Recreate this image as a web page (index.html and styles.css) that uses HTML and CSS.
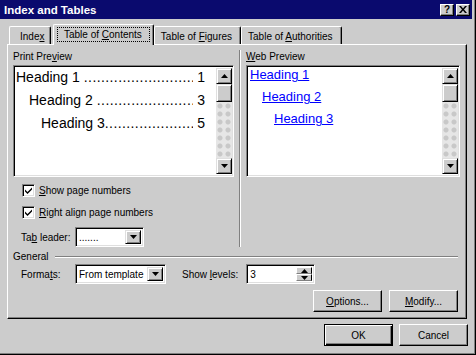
FILE: index.html
```html
<!DOCTYPE html>
<html lang="en">
<head>
  <meta charset="UTF-8">
  <title>Index and Tables</title>
  <link rel="stylesheet" href="styles.css">
</head>
<body>
  <div class="window">
    <div class="titlebar">
      <span class="title">Index and Tables</span>
      <div class="caption-btns">
        <div class="cap-btn help">?</div>
        <div class="cap-btn">
          <svg width="8" height="7" viewBox="0 0 8 7"><path d="M0 0h2l2 2.5L6 0h2L5 3.5 8 7H6L4 4.5 2 7H0l3-3.5z" fill="#000"/></svg>
        </div>
      </div>
    </div>

    <div class="tabs">
      <div class="tab first"><span>Inde<u>x</u></span></div>
      <div class="tab active"><span class="focus">Table of <u>C</u>ontents</span></div>
      <div class="tab"><span>Table of <u>F</u>igures</span></div>
      <div class="tab"><span>Table of <u>A</u>uthorities</span></div>
    </div>

    <div class="panel">
      <div class="previews">
        <div class="col print-col">
          <div class="label">Print Pre<u>v</u>iew</div>
          <div class="preview-box">
            <div class="preview-content print">
              <div class="toc-line lvl1"><span>Heading 1</span><span class="dots"></span><span>1</span></div>
              <div class="toc-line lvl2"><span>Heading 2</span><span class="dots"></span><span>3</span></div>
              <div class="toc-line lvl3"><span>Heading 3</span><span class="dots tight"></span><span>5</span></div>
            </div>
            <div class="scrollbar">
              <div class="sb-btn"><svg width="7" height="4" viewBox="0 0 7 4"><path d="M3.5 0L7 4H0z" fill="#000"/></svg></div>
              <div class="sb-btn thumb"></div>
              <div class="sb-track"></div>
              <div class="sb-btn"><svg width="7" height="4" viewBox="0 0 7 4"><path d="M0 0h7L3.5 4z" fill="#000"/></svg></div>
            </div>
          </div>
          <div class="check-row">
            <span class="checkbox"><svg width="9" height="9" viewBox="0 0 9 9"><path d="M1 3.5l2.5 2.5L8 1.5v2L3.5 8 1 5.5z" fill="#000"/></svg></span>
            <span><u>S</u>how page numbers</span>
          </div>
          <div class="check-row">
            <span class="checkbox"><svg width="9" height="9" viewBox="0 0 9 9"><path d="M1 3.5l2.5 2.5L8 1.5v2L3.5 8 1 5.5z" fill="#000"/></svg></span>
            <span><u>R</u>ight align page numbers</span>
          </div>
          <div class="field-row leader-row">
            <span class="field-label">Ta<u>b</u> leader:</span>
            <div class="combo leader">
              <span class="combo-value">.......</span>
              <div class="combo-btn"><svg width="7" height="4" viewBox="0 0 7 4"><path d="M0 0h7L3.5 4z" fill="#000"/></svg></div>
            </div>
          </div>
        </div>

        <div class="divider"></div>

        <div class="col web-col">
          <div class="label"><u>W</u>eb Preview</div>
          <div class="preview-box">
            <div class="preview-content web">
              <a class="web-line lvl1">Heading 1</a>
              <a class="web-line lvl2">Heading 2</a>
              <a class="web-line lvl3">Heading 3</a>
            </div>
            <div class="scrollbar">
              <div class="sb-btn"><svg width="7" height="4" viewBox="0 0 7 4"><path d="M3.5 0L7 4H0z" fill="#000"/></svg></div>
              <div class="sb-btn thumb"></div>
              <div class="sb-track"></div>
              <div class="sb-btn"><svg width="7" height="4" viewBox="0 0 7 4"><path d="M0 0h7L3.5 4z" fill="#000"/></svg></div>
            </div>
          </div>
        </div>
      </div>

      <div class="group-title"><span>General</span><div class="group-line"></div></div>

      <div class="field-row general-row">
        <span class="field-label">Forma<u>t</u>s:</span>
        <div class="combo formats">
          <span class="combo-value">From template</span>
          <div class="combo-btn"><svg width="7" height="4" viewBox="0 0 7 4"><path d="M0 0h7L3.5 4z" fill="#000"/></svg></div>
        </div>
        <span class="field-label levels-label">Show <u>l</u>evels:</span>
        <div class="spin">
          <span class="combo-value">3</span>
          <div class="spin-btns">
            <div class="spin-btn"><svg width="7" height="4" viewBox="0 0 7 4"><path d="M3.5 0L7 4H0z" fill="#000"/></svg></div>
            <div class="spin-btn"><svg width="7" height="4" viewBox="0 0 7 4"><path d="M0 0h7L3.5 4z" fill="#000"/></svg></div>
          </div>
        </div>
      </div>

      <div class="button-row">
        <div class="btn"><span><u>O</u>ptions...</span></div>
        <div class="btn"><span><u>M</u>odify...</span></div>
      </div>
    </div>

    <div class="footer">
      <div class="btn default">OK</div>
      <div class="btn">Cancel</div>
    </div>
  </div>
</body>
</html>
```

FILE: styles.css
```css
body {
  margin: 0;
  padding: 0;
  background-color: #cccccc;
  font-family: "Liberation Sans", Arial, sans-serif;
  font-size: 10px;
  color: #000;
}
u {
  text-decoration: underline;
  text-underline-offset: 1px;
}
.window {
  width: 476px;
  height: 355px;
  box-sizing: border-box;
  background-color: #cccccc;
  border-right: 1px solid #000;
  border-bottom: 1px solid #000;
  box-shadow: inset -1px -1px 0 #808080;
  padding: 0 2px 0 0;
  overflow: hidden;
}
.titlebar {
  height: 19px;
  background-color: #0a0a6e;
  display: flex;
  align-items: center;
  justify-content: space-between;
  padding: 0 2px 0 4px;
  margin-right: 1px;
}
.title {
  color: #fff;
  font-weight: bold;
  font-size: 11.5px;
}
.caption-btns {
  display: flex;
  gap: 2px;
}
.cap-btn {
  width: 14px;
  height: 12px;
  box-sizing: border-box;
  background-color: #cccccc;
  border-top: 1px solid #fff;
  border-left: 1px solid #fff;
  border-right: 1px solid #000;
  border-bottom: 1px solid #000;
  box-shadow: inset -1px -1px 0 #808080;
  display: flex;
  align-items: center;
  justify-content: center;
}
.cap-btn.help {
  font-weight: bold;
  font-size: 10px;
  line-height: 10px;
}

/* tabs */
.tabs {
  display: flex;
  align-items: flex-end;
  height: 25px;
  padding-left: 9px;
  position: relative;
  z-index: 1;
}
.tab {
  height: 18px;
  padding: 2px 8px 0 6px;
  display: flex;
  align-items: center;
  white-space: nowrap;
  background-color: #cccccc;
  border-top: 1px solid #fff;
  border-left: 1px solid #fff;
  border-right: 1px solid #000;
  box-shadow: inset -1px 0 0 #808080;
  border-radius: 2px 2px 0 0;
  box-sizing: border-box;
}
.tab.first {
  width: 42px;
  padding: 2px 0 0 10px;
  margin-right: 6px;
}
.tab.active {
  height: 21px;
  margin: 0 0 -1px -4px;
  padding: 0 3px 2px 3px;
}
.focus {
  border: 1px dotted #000;
  padding: 1px 7px 1px 6px;
}

/* main panel */
.panel {
  margin: 0 6px 0 7px;
  height: 275px;
  box-sizing: border-box;
  border-top: 1px solid #fff;
  border-left: 1px solid #fff;
  border-right: 1px solid #000;
  border-bottom: 1px solid #000;
  box-shadow: inset -1px -1px 0 #808080;
  padding: 5px 6px 0 5px;
}
.previews {
  display: flex;
  height: 197px;
}
.col {
  display: flex;
  flex-direction: column;
}
.col > * {
  flex-shrink: 0;
}
.print-col {
  width: 221px;
}
.web-col {
  width: 215px;
}
.divider {
  width: 1px;
  border-right: 1px solid #fff;
  background-color: #808080;
  margin: 0 5px 0 5px;
}
.label {
  height: 14px;
  line-height: 14px;
}
.preview-box {
  height: 112px;
  box-sizing: border-box;
  border-top: 1px solid #808080;
  border-left: 1px solid #808080;
  border-right: 1px solid #fff;
  border-bottom: 1px solid #fff;
  box-shadow: inset 1px 1px 0 #000, inset -1px -1px 0 #dfdfdf;
  background-color: #fff;
  display: flex;
  padding: 2px 1px 2px 2px;
  margin-top: 1px;
}
.preview-content {
  flex: 1;
  overflow: hidden;
}
.preview-content.print {
  font-size: 14px;
  padding-right: 11px;
}
.toc-line {
  display: flex;
  height: 23px;
  line-height: 19px;
  white-space: nowrap;
}
.toc-line.lvl2 {
  padding-left: 13px;
}
.toc-line.lvl3 {
  padding-left: 25px;
}
.dots {
  flex: 1;
  overflow: hidden;
  margin: 0 4px;
  letter-spacing: 0.4px;
}
.dots.tight {
  margin-left: 0;
}
.dots::before {
  content: "..........................................................";
}
.preview-content.web {
  display: flex;
  flex-direction: column;
  align-items: flex-start;
  font-size: 13px;
  padding-left: 1px;
}
.web-line {
  color: #0000ff;
  text-decoration: underline;
  height: 22px;
  line-height: 14px;
  white-space: nowrap;
}
.web-line.lvl2 {
  margin-left: 12px;
}
.web-line.lvl3 {
  margin-left: 24px;
}
.scrollbar {
  width: 16px;
  display: flex;
  flex-direction: column;
}
.sb-btn {
  width: 16px;
  height: 16px;
  box-sizing: border-box;
  background-color: #cccccc;
  border-top: 1px solid #dfdfdf;
  border-left: 1px solid #dfdfdf;
  border-right: 1px solid #000;
  border-bottom: 1px solid #000;
  box-shadow: inset 1px 1px 0 #fff, inset -1px -1px 0 #808080;
  display: flex;
  align-items: center;
  justify-content: center;
}
.sb-btn.thumb {
  height: 18px;
}
.sb-track {
  flex: 1;
  background-color: #e6e6e6;
  background-image: radial-gradient(circle, #c8c8c8 2px, transparent 3px);
  background-size: 8px 8px;
}

/* checkboxes and fields */
.check-row {
  display: flex;
  align-items: center;
  gap: 4px;
  height: 13px;
  margin: 7px 0 0 9px;
  white-space: nowrap;
}
.check-row + .check-row {
  margin-top: 9px;
}
.checkbox {
  width: 13px;
  height: 13px;
  box-sizing: border-box;
  border-top: 1px solid #808080;
  border-left: 1px solid #808080;
  border-right: 1px solid #fff;
  border-bottom: 1px solid #fff;
  box-shadow: inset 1px 1px 0 #000, inset -1px -1px 0 #dfdfdf;
  background-color: #fff;
  display: flex;
  align-items: center;
  justify-content: center;
}
.field-row {
  display: flex;
  align-items: center;
  white-space: nowrap;
}
.leader-row {
  margin-top: 8px;
  padding-left: 8px;
}
.field-label {
  width: 54px;
}
.combo, .spin {
  height: 20px;
  box-sizing: border-box;
  border-top: 1px solid #808080;
  border-left: 1px solid #808080;
  border-right: 1px solid #fff;
  border-bottom: 1px solid #fff;
  box-shadow: inset 1px 1px 0 #000, inset -1px -1px 0 #dfdfdf;
  background-color: #fff;
  display: flex;
  align-items: stretch;
  padding: 2px;
}
.combo-value {
  flex: 1;
  line-height: 16px;
  padding-left: 1px;
}
.combo-btn {
  width: 16px;
  box-sizing: border-box;
  background-color: #cccccc;
  border-top: 1px solid #dfdfdf;
  border-left: 1px solid #dfdfdf;
  border-right: 1px solid #000;
  border-bottom: 1px solid #000;
  box-shadow: inset 1px 1px 0 #fff, inset -1px -1px 0 #808080;
  display: flex;
  align-items: center;
  justify-content: center;
}
.combo.leader {
  width: 69px;
}
.combo.formats {
  width: 91px;
}
.spin {
  width: 69px;
}
.spin-btns {
  width: 16px;
  display: flex;
  flex-direction: column;
}
.spin-btn {
  flex: 1;
  box-sizing: border-box;
  background-color: #cccccc;
  border-top: 1px solid #fff;
  border-left: 1px solid #fff;
  border-right: 1px solid #000;
  border-bottom: 1px solid #808080;
  display: flex;
  align-items: center;
  justify-content: center;
}

/* General group */
.group-title {
  display: flex;
  align-items: center;
  height: 13px;
  margin-top: 3px;
}
.group-line {
  flex: 1;
  height: 1px;
  background-color: #808080;
  border-bottom: 1px solid #fff;
  margin: 0 2px 0 6px;
}
.general-row {
  margin-top: 1px;
  padding-left: 8px;
}
.levels-label {
  width: auto;
  margin: 0 8px 0 16px;
}
.button-row {
  display: flex;
  justify-content: flex-end;
  gap: 7px;
  margin-top: 6px;
  padding-right: 2px;
}
.btn {
  width: 69px;
  height: 22px;
  box-sizing: border-box;
  background-color: #cccccc;
  border-top: 1px solid #fff;
  border-left: 1px solid #fff;
  border-right: 1px solid #000;
  border-bottom: 1px solid #000;
  box-shadow: inset -1px -1px 0 #808080;
  display: flex;
  align-items: center;
  justify-content: center;
}
.footer {
  display: flex;
  justify-content: flex-end;
  gap: 6px;
  padding: 5px 5px 0 0;
}
.btn.default {
  border: 1px solid #000;
  box-shadow: inset 1px 1px 0 #fff, inset -1px -1px 0 #000, inset -2px -2px 0 #808080;
}
```
